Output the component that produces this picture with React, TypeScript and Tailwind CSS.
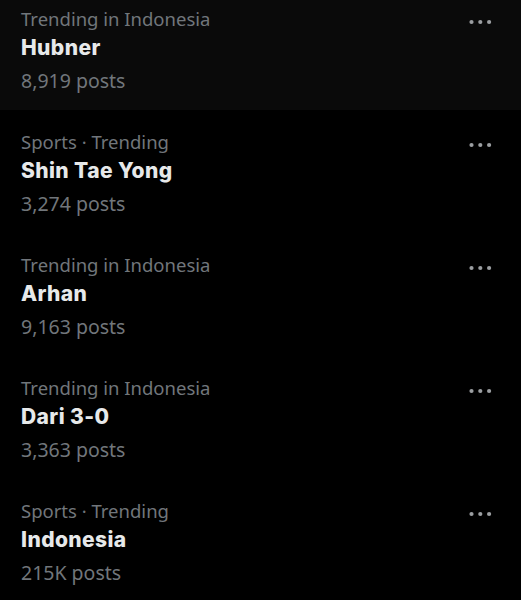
const trends = [
  { meta: "Trending in Indonesia", name: "Hubner", posts: "8,919 posts", hover: true },
  { meta: "Sports · Trending", name: "Shin Tae Yong", posts: "3,274 posts" },
  { meta: "Trending in Indonesia", name: "Arhan", posts: "9,163 posts" },
  { meta: "Trending in Indonesia", name: "Dari 3-0", posts: "3,363 posts" },
  { meta: "Sports · Trending", name: "Indonesia", posts: "215K posts" },
];

function MoreIcon() {
  return (
    <svg width="26" height="8" viewBox="0 0 26 8" className="block">
      <circle cx="4.5" cy="4" r="2.1" fill="#9b9ea1" />
      <circle cx="13.3" cy="4" r="2.1" fill="#9b9ea1" />
      <circle cx="22.1" cy="4" r="2.1" fill="#9b9ea1" />
    </svg>
  );
}

export default function App() {
  return (
    <div className="bg-black h-[600px] w-[521px] overflow-hidden font-['Noto_Sans',sans-serif]">
      <div className="-mt-[13px]">
        {trends.map((t) => (
          <div
            key={t.name}
            className={`flex justify-between pl-[21px] pr-[28px] pt-[19px] pb-[17px] ${t.hover ? "bg-[#0a0a0a]" : ""}`}
          >
            <div className="flex flex-col">
              <div className="text-[18.5px] leading-[25px] text-[#71767b]">{t.meta}</div>
              <div className="mt-[4px] text-[21px] leading-[25px] font-extrabold tracking-[0.4px] text-[#e7e9ea] font-['Inter',sans-serif]">
                {t.name}
              </div>
              <div className="mt-[8px] text-[19.5px] leading-[25px] text-[#71767b]">{t.posts}</div>
            </div>
            <div className="pt-[12px]">
              <MoreIcon />
            </div>
          </div>
        ))}
      </div>
    </div>
  );
}
